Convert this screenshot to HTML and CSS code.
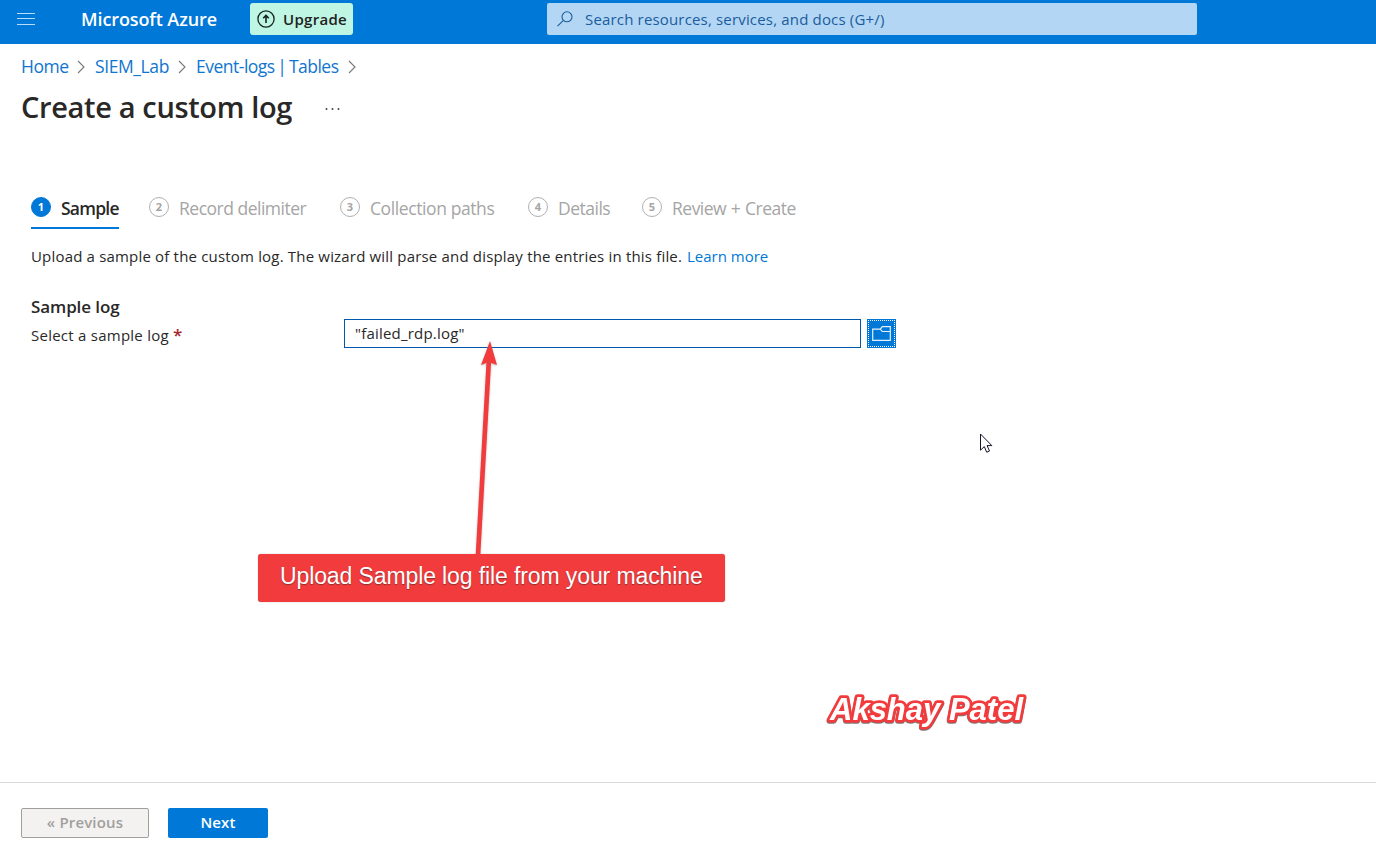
FILE: index.html
```html
<!DOCTYPE html>
<html lang="en">
<head>
<meta charset="utf-8">
<title>Create a custom log - Microsoft Azure</title>
<link rel="stylesheet" href="styles.css">
</head>
<body>
<div class="page">
  <header class="topbar">
    <svg class="menu" width="18" height="12" viewBox="0 0 18 12"><path d="M0 .5h18M0 5.5h18M0 11.5h18" stroke="#b9dcf8" stroke-width="1.2"/></svg>
    <span class="brand">Microsoft Azure</span>
    <button class="upgrade">
      <svg width="18" height="18" viewBox="0 0 18 18" fill="none" stroke="#14231f" stroke-width="1.3"><circle cx="9" cy="9" r="8.1"/><path d="M9 13V5.6M6.2 8.2 9 5.4l2.8 2.8" stroke-width="1.6"/></svg>
      <span>Upgrade</span>
    </button>
    <div class="search">
      <svg width="16" height="16" viewBox="0 0 16 16" fill="none" stroke="#1b5c9e" stroke-width="1.1"><circle cx="10" cy="5.8" r="5"/><path d="M6.4 9.4.5 15.2"/></svg>
      <span>Search resources, services, and docs (G+/)</span>
    </div>
  </header>
  <nav class="crumbs">
    <a class="c-home">Home</a>
    <svg class="chev" width="8" height="14" viewBox="0 0 8 14"><path d="m1 1 6 6-6 6"/></svg>
    <a class="c-lab">SIEM_Lab</a>
    <svg class="chev" width="8" height="14" viewBox="0 0 8 14"><path d="m1 1 6 6-6 6"/></svg>
    <a class="c-tables">Event-logs | Tables</a>
    <svg class="chev" width="8" height="14" viewBox="0 0 8 14"><path d="m1 1 6 6-6 6"/></svg>
  </nav>
  <div class="title-row">
    <h1>Create a custom log</h1>
    <svg class="more" width="16" height="4" viewBox="0 0 16 4" fill="#444"><circle cx="1.5" cy="2" r="1"/><circle cx="7.5" cy="2" r="1"/><circle cx="13.5" cy="2" r="1"/></svg>
  </div>
  <main class="content">
    <div class="tabs">
      <div class="tab t1 active"><i>1</i><span>Sample</span></div>
      <div class="tab t2"><i>2</i><span>Record delimiter</span></div>
      <div class="tab t3"><i>3</i><span>Collection paths</span></div>
      <div class="tab t4"><i>4</i><span>Details</span></div>
      <div class="tab t5"><i>5</i><span>Review + Create</span></div>
    </div>
    <p class="intro"><span>Upload a sample of the custom log. The wizard will parse and display the entries in this file.</span><a>Learn more</a></p>
    <h2>Sample log</h2>
    <div class="field">
      <label>Select a sample log <b>*</b></label>
      <div class="file-name">"failed_rdp.log"</div>
      <button class="browse"><svg width="19" height="15" viewBox="0 0 19 15" fill="none" stroke="#e4f1fc" stroke-width="1.2"><path d="M8.2 3.2H.7v11.1h17.6V.7h-8l-2 2.3 2 2.5h8"/></svg></button>
    </div>
  </main>
  <footer class="footer">
    <button class="btn previous"><span>« Previous</span></button>
    <button class="btn next"><span>Next</span></button>
  </footer>
  <svg class="arrow" width="24" height="216" viewBox="0 0 24 216"><path d="m5 214 10.8-193" stroke="#f23b3c" stroke-width="4.6"/><path d="M17 0 8 24l7.5-3 8.5 3z" fill="#f23b3c"/></svg>
  <div class="callout"><span>Upload Sample log file from your machine</span></div>
  <svg class="signature" width="210" height="48" viewBox="0 0 210 48"><text x="9" y="31" textLength="193" lengthAdjust="spacingAndGlyphs">Akshay Patel</text></svg>
  <svg class="cursor" width="14" height="21" viewBox="0 0 14 21"><path d="M.5 1v16.2l3.8-3.6 2.4 5.6 2.8-1.2-2.4-5.4h4.7z" fill="#fff" stroke="#15152a"/></svg>
</div>
</body>
</html>
```
FILE: styles.css
```css
* { box-sizing: border-box; }
body { margin: 0; background: #fff; color: #292827; font-family: "Open Sans", "Noto Sans", sans-serif; }
h1, h2, p { margin: 0; }
button { font-family: inherit; padding: 0; }
svg { display: block; flex: none; }
.page { position: relative; width: 1376px; height: 846px; display: flex; flex-direction: column; overflow: hidden; white-space: nowrap; }
.topbar { height: 44px; flex: none; background: #0078d7; display: flex; align-items: flex-start; padding: 3px 0 0 17px; }
.menu { margin: 10px 46px 0 0; }
.brand { width: 169px; font-size: 18px; font-weight: 600; line-height: 32px; color: #fff; letter-spacing: -.1px; }
.upgrade { width: 103px; height: 32px; border: 0; border-radius: 3px; background: #bff6e3; display: flex; align-items: center; gap: 8px; padding-left: 7px; color: #222; font-size: 15px; font-weight: 600; letter-spacing: .3px; }
.search { margin-left: 194px; width: 650px; height: 32px; border-radius: 2px; background: #b2d6f3; color: #1b5c9e; display: flex; align-items: center; padding-left: 10px; gap: 12px; font-size: 15px; letter-spacing: .17px; }
.crumbs { height: 46px; flex: none; display: flex; align-items: center; padding-left: 21px; font-size: 17.5px; color: #0f75d0; letter-spacing: -.5px; }
.crumbs a { line-height: 24px; padding-bottom: 2px; }
.c-home { width: 56px; }
.c-lab { width: 74px; margin-left: 10px; margin-right: 9px; letter-spacing: -.4px; }
.c-lab + .chev { margin-right: 10px; }
.c-tables { width: 152px; word-spacing: -1.5px; }
.chev { fill: none; stroke: #777; stroke-width: 1.1; }
.title-row { height: 36px; flex: none; display: flex; align-items: center; padding-left: 21px; }
h1 { width: 304px; font-size: 29px; line-height: 36px; margin-top: -2px; font-weight: 600; letter-spacing: -.35px; }
.more { margin-top: 2px; }
.content { flex: 1; padding: 70px 0 0 31px; }
.tabs { display: flex; height: 33px; }
.tab { display: flex; gap: 10px; color: #a5a5a5; font-size: 17.5px; line-height: 25px; letter-spacing: -.5px; }
.tab i { width: 20px; height: 20px; flex: none; margin-top: 1px; border: 1px solid #b0b0b0; border-radius: 50%; font-size: 11px; font-style: normal; font-weight: 700; line-height: 18px; text-align: center; letter-spacing: 0; }
.tab.active { color: #292827; font-weight: 600; border-bottom: 2px solid #0078d7; letter-spacing: -.75px; }
.active i { background: #0078d7; border-color: #0078d7; color: #fff; }
.t1 { width: 88px; margin-right: 30px; }
.t2 { width: 191px; }
.t3 { width: 188px; letter-spacing: -.4px; }
.t4 { width: 114px; }
.t5 { letter-spacing: -.5px; word-spacing: .6px; }
.intro { display: flex; margin-top: 15px; font-size: 15px; line-height: 24px; }
.intro span { width: 656px; letter-spacing: .18px; }
.intro a { color: #0078d7; }
h2 { margin-top: 26px; font-size: 17px; line-height: 25px; font-weight: 600; letter-spacing: -.1px; }
.field { display: flex; font-size: 15px; }
.field label { width: 313px; line-height: 32px; letter-spacing: .25px; }
.field b { color: #a4262c; font-size: 17px; line-height: 20px; font-weight: 600; }
.file-name { width: 517px; height: 29px; border: 1px solid #0058ad; padding-left: 10px; line-height: 27px; letter-spacing: .2px; }
.browse { width: 29px; height: 29px; margin-left: 6px; border: 1px solid #0078d7; background: #0078d7; outline: 1px dotted #fff; outline-offset: -2px; display: grid; place-items: center; }
.footer { height: 64px; flex: none; border-top: 1px solid #d9d9d9; padding: 25px 0 0 21px; display: flex; gap: 19px; }
.btn { height: 30px; border-radius: 2px; font-size: 15px; font-weight: 600; letter-spacing: .15px; padding-bottom: 2px; }
.previous { width: 128px; border: 1px solid #a19f9d; background: #f3f2f1; color: #a19f9d; }
.next { width: 100px; border: 0; background: #0078d7; color: #fff; }
.arrow { position: absolute; left: 473px; top: 341px; filter: drop-shadow(0 1px 1px #8888); }
.callout { position: absolute; left: 258px; top: 554px; width: 467px; height: 48px; border-radius: 3px; background: #f23b3c; box-shadow: 0 0 1px #777; color: #fff; padding-left: 22px; font: 23px/45px "Liberation Sans", sans-serif; letter-spacing: -.11px; text-shadow: 0 1px 1px #8a3030; }
.signature { position: absolute; left: 821px; top: 689px; filter: drop-shadow(0 1px .5px #777); }
.signature text { fill: #fff; stroke: #f23b3c; stroke-width: 5.5px; stroke-linejoin: round; paint-order: stroke fill; font: italic bold 31px "Liberation Sans", sans-serif; }
.cursor { position: absolute; left: 980px; top: 433px; }
```
